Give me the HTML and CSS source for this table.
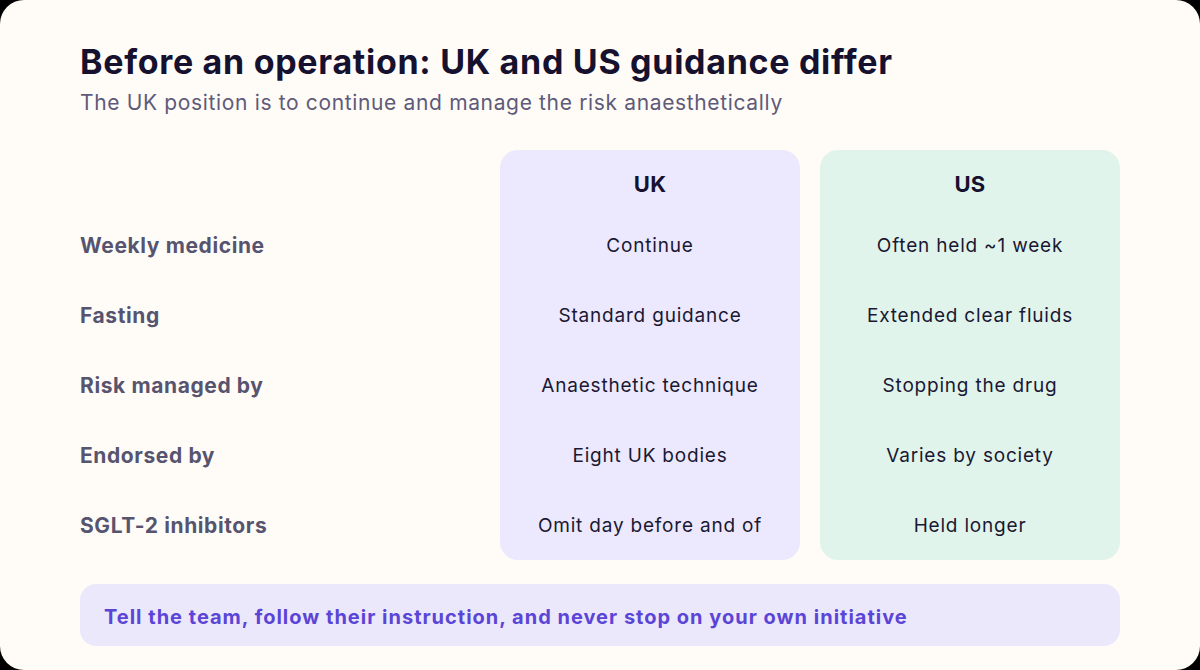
FILE: index.html
```html
<!DOCTYPE html>
<html lang="en">
<head>
<meta charset="utf-8">
<title>Before an operation</title>
<link rel="stylesheet" href="styles.css">
</head>
<body>
<main class="slide">
  <h1 class="title">Before an operation: UK and US guidance differ</h1>
  <p class="subtitle">The UK position is to continue and manage the risk anaesthetically</p>

  <section class="compare">
    <div class="col labels">
      <div class="head"></div>
      <div class="cell">Weekly medicine</div>
      <div class="cell">Fasting</div>
      <div class="cell">Risk managed by</div>
      <div class="cell">Endorsed by</div>
      <div class="cell">SGLT-2 inhibitors</div>
    </div>
    <div class="col card uk">
      <div class="head">UK</div>
      <div class="cell">Continue</div>
      <div class="cell">Standard guidance</div>
      <div class="cell">Anaesthetic technique</div>
      <div class="cell">Eight UK bodies</div>
      <div class="cell">Omit day before and of</div>
    </div>
    <div class="col card us">
      <div class="head">US</div>
      <div class="cell">Often held ~1 week</div>
      <div class="cell">Extended clear fluids</div>
      <div class="cell">Stopping the drug</div>
      <div class="cell">Varies by society</div>
      <div class="cell">Held longer</div>
    </div>
  </section>

  <div class="banner">Tell the team, follow their instruction, and never stop on your own initiative</div>
</main>
</body>
</html>
```

FILE: styles.css
```css
* { box-sizing: border-box; margin: 0; padding: 0; }

html, body {
  width: 1200px;
  height: 670px;
  background: #000;
  overflow: hidden;
}

body {
  font-family: "Inter", "Noto Sans", sans-serif;
}

.slide {
  width: 1200px;
  height: 670px;
  background: #fffcf8;
  border-radius: 24px;
  padding: 40px 80px 24px;
  display: flex;
  flex-direction: column;
}

.title {
  font-size: 34px;
  line-height: 44px;
  font-weight: 700;
  color: #15112e;
  letter-spacing: 0.7px;
}

.subtitle {
  font-size: 21px;
  line-height: 28px;
  font-weight: 400;
  color: #5e5a78;
  margin-top: 5px;
  letter-spacing: 0.65px;
}

.compare {
  margin-top: 33px;
  display: grid;
  grid-template-columns: 400px 300px 300px;
  column-gap: 20px;
}

.col {
  display: flex;
  flex-direction: column;
}

.card {
  border-radius: 18px;
  text-align: center;
}

.uk { background: #ece8fd; }
.us { background: #e1f4eb; }

.head {
  height: 60px;
  padding-top: 8px;
  display: flex;
  align-items: center;
  justify-content: center;
  font-size: 22px;
  font-weight: 700;
  color: #15112e;
  letter-spacing: 0.3px;
}

.cell {
  height: 70px;
  display: flex;
  align-items: center;
  justify-content: center;
  font-size: 19px;
  color: #1a1833;
  letter-spacing: 0.8px;
}

.labels .cell {
  justify-content: flex-start;
  font-size: 21px;
  font-weight: 700;
  color: #57546f;
  letter-spacing: 0.6px;
}

.banner {
  margin-top: 24px;
  height: 62px;
  border-radius: 16px;
  background: #ece8fc;
  padding: 3px 24px 0;
  display: flex;
  align-items: center;
  font-size: 20px;
  font-weight: 700;
  color: #5b45d6;
  letter-spacing: 1px;
}
```
